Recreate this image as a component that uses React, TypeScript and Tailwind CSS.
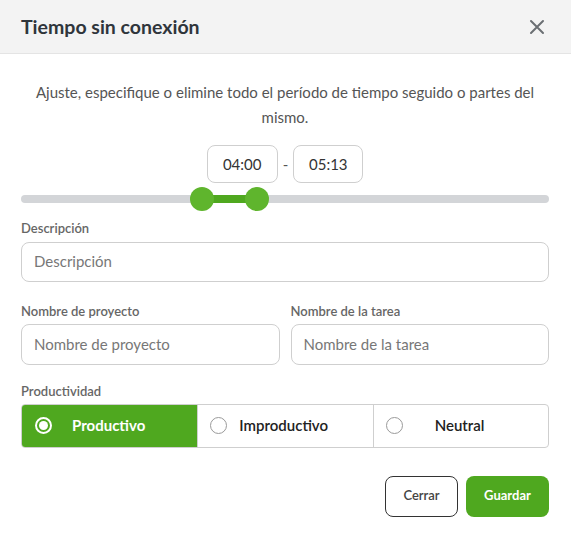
import React from "react";

const GREEN = "bg-[#4fa81f]";

function Radio({ checked }: { checked?: boolean }) {
  if (checked) {
    return (
      <span className="flex h-[17px] w-[17px] items-center justify-center rounded-full border-2 border-white">
        <span className="h-[9px] w-[9px] rounded-full bg-white" />
      </span>
    );
  }
  return <span className="h-[17px] w-[17px] rounded-full border border-[#9a9a9a] bg-white" />;
}

export default function App() {
  return (
    <div className="min-h-[538px] w-[571px] bg-white text-[#333]" style={{ fontFamily: "Lato, 'Open Sans', sans-serif" }}>
      <div className="flex h-[54px] items-center justify-between border-b border-[#e4e4e4] bg-[#f3f3f3] pl-[21px] pr-[26px]">
        <h1 className="text-[19.5px] font-bold text-[#2f353b]">Tiempo sin conexión</h1>
        <svg width="16" height="16" viewBox="0 0 16 16" className="text-[#6b6f73]">
          <path d="M2 2 L14 14 M14 2 L2 14" stroke="currentColor" strokeWidth="2" strokeLinecap="round" />
        </svg>
      </div>
      <div className="pl-[21px] pr-[22px]">
        <p className="mt-[26px] px-[8px] text-center text-[15px] leading-[25px] text-[#555]">
          Ajuste, especifique o elimine todo el período de tiempo seguido o partes del mismo.
        </p>
        <div className="mt-[15px] flex items-center justify-center gap-[5px]">
          <div className="flex h-[38px] w-[71px] items-center justify-center rounded-[8px] border border-[#cfcfcf] text-[15px] text-[#333]">04:00</div>
          <span className="text-[15px] text-[#555]">-</span>
          <div className="flex h-[38px] w-[70px] items-center justify-center rounded-[8px] border border-[#cfcfcf] text-[15px] text-[#333]">05:13</div>
        </div>
        <div className="relative mt-[12px] h-[8px] rounded-full bg-[#d3d5d8]">
          <div className="absolute top-0 h-[8px] bg-[#4fa81f]" style={{ left: 181, width: 55 }} />
          <div className="absolute top-[-8px] h-[24px] w-[24px] rounded-full bg-[#5fb52d]" style={{ left: 169 }} />
          <div className="absolute top-[-8px] h-[24px] w-[24px] rounded-full bg-[#5fb52d]" style={{ left: 224 }} />
        </div>
        <label className="mt-[16px] block text-[13px] font-semibold text-[#666]">Descripción</label>
        <div className="mt-[3px] flex h-[40px] items-center rounded-[8px] border border-[#cfcfcf] px-[12px] text-[15px] text-[#777]">Descripción</div>
        <div className="mt-[20px] grid grid-cols-2 gap-[11px]">
          <div>
            <label className="block text-[13px] font-semibold text-[#666]">Nombre de proyecto</label>
            <div className="mt-[3px] flex h-[41px] items-center rounded-[8px] border border-[#cfcfcf] px-[12px] text-[15px] text-[#777]">Nombre de proyecto</div>
          </div>
          <div>
            <label className="block text-[13px] font-semibold text-[#666]">Nombre de la tarea</label>
            <div className="mt-[3px] flex h-[41px] items-center rounded-[8px] border border-[#cfcfcf] px-[12px] text-[15px] text-[#777]">Nombre de la tarea</div>
          </div>
        </div>
        <label className="mt-[17px] block text-[13px] font-semibold text-[#666]">Productividad</label>
        <div className="mt-[2px] grid h-[44px] grid-cols-3 overflow-hidden rounded-[4px] border border-[#cfcfcf]">
          <div className={`flex items-center gap-[20px] ${GREEN} pl-[13px] text-[15px] font-bold text-white`}>
            <Radio checked />
            <span>Productivo</span>
          </div>
          <div className="flex items-center gap-[12px] border-l border-[#cfcfcf] pl-[12px] text-[15px] font-semibold text-[#222]">
            <Radio />
            <span>Improductivo</span>
          </div>
          <div className="flex items-center border-l border-[#cfcfcf] pl-[12px] text-[15px] font-semibold text-[#222]">
            <Radio />
            <span className="ml-[32px]">Neutral</span>
          </div>
        </div>
        <div className="mt-[28px] flex justify-end gap-[8px]">
          <button className="h-[41px] w-[73px] rounded-[8px] border border-[#333] bg-white text-[13px] font-semibold text-[#444]">Cerrar</button>
          <button className={`h-[41px] w-[83px] rounded-[8px] ${GREEN} text-[13px] font-bold text-white`}>Guardar</button>
        </div>
      </div>
    </div>
  );
}
